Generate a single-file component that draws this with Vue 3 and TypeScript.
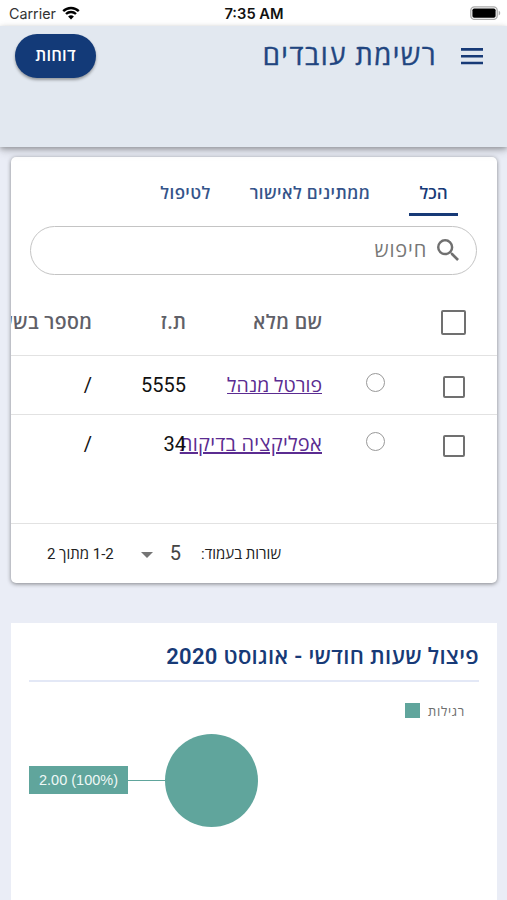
<script setup lang="ts">
interface Employee {
  name: string
  id: string
  shift: string
}

const tabs: string[] = ['הכל', 'ממתינים לאישור', 'לטיפול']
const activeTab = 'הכל'

const employees: Employee[] = [
  { name: 'פורטל מנהל', id: '5555', shift: '/' },
  { name: 'אפליקציה בדיקות', id: '34', shift: '/' },
]
</script>

<template>
  <div class="screen" dir="rtl">
    <div class="status" dir="ltr">
      <div class="carrier">
        <span>Carrier</span>
        <svg class="wifi" viewBox="0 0 18 14" width="18" height="14">
          <path d="M1.2 5.1a11.2 11.2 0 0 1 15.6 0" />
          <path d="M4 8a7.2 7.2 0 0 1 10 0" />
          <path class="dot" d="M9 13.6 6.1 10.6a4.2 4.2 0 0 1 5.8 0z" />
        </svg>
      </div>
      <div class="clock">7:35 AM</div>
      <div class="power">
        <svg viewBox="0 0 31 14" width="31" height="14">
          <rect x="0.8" y="0.8" width="26.4" height="12.6" rx="3.6" fill="#fff" stroke="#aaa" stroke-width="1.3" />
          <rect x="2.4" y="2.4" width="23.2" height="9.4" rx="1.8" fill="#000" />
          <path d="M28.7 4.8c2 .7 2 3.900 0 4.600z" fill="#aaa" />
        </svg>
      </div>
    </div>

    <header class="header">
      <div class="heading">
        <svg class="menu" viewBox="0 0 24 18" width="24" height="18">
          <path d="M1 2.400h22M1 9.200h22M1 16h22" />
        </svg>
        <h1>רשימת עובדים</h1>
      </div>
      <button class="reports">דוחות</button>
    </header>

    <section class="card">
      <nav class="tabs">
        <a v-for="(tab, i) in tabs" :key="tab" class="tab" :class="['tab-' + i, { active: tab === activeTab }]">{{ tab }}</a>
      </nav>

      <div class="search">
        <svg viewBox="3 3 17.500 17.500" width="22" height="22">
          <path d="M15.500 14h-.79l-.28-.27A6.470 6.470 0 0 0 16 9.500 6.500 6.500 0 1 0 9.500 16c1.610 0 3.090-.59 4.230-1.570l.27.28v.79l5 4.990L20.490 19l-4.990-5zm-6 0C7.010 14 5 11.990 5 9.500S7.010 5 9.500 5 14 7.010 14 9.500 11.990 14 9.500 14z" />
        </svg>
        <span>חיפוש</span>
      </div>

      <div class="row head">
        <div class="center"><i class="box large"></i></div>
        <div></div>
        <div class="cell">שם מלא</div>
        <div class="cell">ת.ז</div>
        <div class="cell">מספר בשעון</div>
      </div>
      <div class="rows">
        <div v-for="(e, i) in employees" :key="e.id" class="row">
          <div class="center"><i class="box"></i></div>
          <div class="center"><i class="ring"></i></div>
          <div class="cell"><a class="name" :class="'name-' + i">{{ e.name }}</a></div>
          <div class="cell value">{{ e.id }}</div>
          <div class="cell value">{{ e.shift }}</div>
        </div>
      </div>

      <div class="pager">
        <span class="per-page">שורות בעמוד:</span>
        <span class="size">5</span>
        <svg class="arrow" viewBox="0 0 12 6" width="12" height="6"><path d="M0 0h12L6 6z" /></svg>
        <span class="range">1-2 מתוך 2</span>
      </div>
    </section>

    <section class="panel">
      <h2>פיצול שעות חודשי - אוגוסט 2020</h2>
      <div class="legend">
        <span>רגילות</span>
        <i></i>
      </div>
      <div class="chart" dir="ltr">
        <span class="tag">2.00 (100%)</span>
        <i class="line"></i>
        <i class="pie"></i>
      </div>
    </section>
  </div>
</template>

<style>
body {
  background: #eaedf6;
}
</style>

<style scoped>
.screen {
  display: flex;
  flex-direction: column;
  height: 900px;
  overflow: hidden;
  background: #eaedf6;
  font-family: Roboto, 'Open Sans', 'Liberation Sans', sans-serif;
  white-space: nowrap;
}
.status {
  flex: none;
  display: grid;
  grid-template-columns: 1fr auto 1fr;
  align-items: center;
  height: 26px;
  padding: 0 6px 0 9px;
  box-sizing: border-box;
  background: #fff;
  color: #111;
  font-family: Inter, sans-serif;
}
.carrier {
  display: flex;
  align-items: center;
  gap: 6px;
  color: #333;
  font-size: 14.3px;
}
.wifi {
  fill: none;
  stroke: #000;
  stroke-width: 2.4;
}
.wifi .dot {
  fill: #000;
  stroke: none;
}
.clock {
  padding: 1px 2px 0 0;
  font-weight: 600;
  font-size: 14.7px;
}
.power {
  display: flex;
  justify-content: flex-end;
}
.header {
  flex: none;
  position: relative;
  display: flex;
  justify-content: space-between;
  align-items: flex-start;
  height: 121px;
  padding: 8px 23px 0 15px;
  box-sizing: border-box;
  background: #e2e8f0;
  box-shadow: 0 2px 5px rgba(0, 0, 0, 0.28), 0 4px 10px rgba(0, 0, 0, 0.14);
}
.heading {
  display: flex;
  align-items: center;
  height: 44px;
  gap: 23px;
}
.menu {
  stroke: #173a77;
  stroke-width: 2.6;
}
h1 {
  margin: -4px 0 0;
  color: #214580;
  font-size: 27.5px;
  font-weight: 400;
  letter-spacing: 1.5px;
  -webkit-text-stroke: 0.4px #214580;
}
.reports {
  width: 81px;
  height: 44px;
  padding: 0 0 3px;
  border: 0;
  border-radius: 22px;
  background: #133a78;
  color: #fff;
  font: 600 16.5px Roboto, 'Open Sans', sans-serif;
  letter-spacing: 0.2px;
  box-shadow: 0 2px 3px rgba(0, 0, 0, 0.35);
}
.card {
  flex: none;
  display: flex;
  flex-direction: column;
  height: 426px;
  margin: 10px 10px 0 11px;
  border-radius: 5px;
  overflow: hidden;
  background: #fff;
  box-shadow: 0 1px 4px rgba(0, 0, 0, 0.45);
}
.tabs {
  display: flex;
  gap: 39px;
  height: 59px;
  padding-right: 39px;
}
.tab {
  display: flex;
  justify-content: center;
  align-items: center;
  padding-top: 14px;
  box-sizing: border-box;
  border-bottom: 3px solid transparent;
  color: #35548a;
  font-size: 17px;
  font-weight: 600;
  letter-spacing: 0.4px;
}
.tab-0 {
  width: 49px;
  letter-spacing: 0;
}
.tab-1 {
  width: 120px;
}
.tab-2 {
  width: 51px;
}
.active {
  border-color: #173a77;
  color: #173a77;
}
.search {
  display: flex;
  align-items: center;
  gap: 10px;
  height: 49px;
  margin: 10px 20px 0 19px;
  padding: 0 17px 1px;
  box-sizing: border-box;
  border: 1px solid #c4c4c4;
  border-radius: 25px;
  color: #777;
  font-size: 20px;
  letter-spacing: 0.8px;
}
.search span {
  margin-top: -1px;
}
.search svg {
  fill: #707070;
}
.row {
  display: grid;
  grid-template-columns: 87px 68px 136px 94px 101px;
  align-items: center;
  height: 59px;
  box-sizing: border-box;
  border-bottom: 1px solid #e2e2e2;
}
.row.head {
  height: 81px;
  padding-top: 13px;
}
.rows {
  height: 168px;
  box-sizing: border-box;
  border-bottom: 1px solid #e2e2e2;
}
.rows .row:last-child {
  border-bottom-color: transparent;
}
.center {
  display: flex;
  justify-content: center;
}
.box {
  width: 22px;
  height: 22px;
  margin: 3px 0 0;
  box-sizing: border-box;
  border: 2px solid #707070;
  border-radius: 2px;
}
.box.large {
  width: 25px;
  height: 25px;
  margin: 1px 0 0;
}
.ring {
  width: 19px;
  height: 19px;
  margin: -6px 1px 0 0;
  box-sizing: border-box;
  border: 1px solid #999;
  border-radius: 50%;
}
.cell {
  padding-right: 20px;
  font-size: 20px;
}
.rows .cell {
  padding-bottom: 1px;
}
.head .cell {
  padding-right: 19.5px;
  color: #606068;
  font-size: 19.5px;
  font-weight: 600;
  letter-spacing: 0.4px;
}
.name {
  color: #5b2c91;
  text-decoration: underline;
}
.name-0 {
  font-size: 19.5px;
}
.name-1 {
  letter-spacing: 0.25px;
}
.value {
  color: #111;
}
.rows .value {
  padding-bottom: 0;
}
.pager {
  flex: 1;
  display: flex;
  align-items: center;
  padding: 0 216px 2px 0;
  color: #222;
  font-size: 15px;
}
.size {
  margin-right: 20px;
  color: #444;
  font-size: 20px;
}
.arrow {
  margin: 4px 17px 0 27px;
  fill: #757575;
}
.panel {
  flex: none;
  height: 290px;
  margin: 40px 10px 0 11px;
  padding: 0 18px;
  background: #fff;
}
h2 {
  height: 59px;
  margin: 0;
  padding-top: 9px;
  box-sizing: border-box;
  border-bottom: 2px solid #e3e8f6;
  color: #173a77;
  font-size: 22px;
  font-weight: 600;
  line-height: 50px;
  letter-spacing: 0.33px;
}
.legend {
  display: flex;
  align-items: center;
  gap: 8px;
  height: 57px;
  padding-right: 14px;
  color: #6e6e6e;
  font-size: 13px;
  letter-spacing: 0.7px;
}
.legend i {
  width: 15px;
  height: 15px;
  background: #60a59c;
}
.chart {
  display: flex;
  align-items: center;
  height: 93px;
  margin-top: -5px;
}
.tag {
  width: 99px;
  height: 28px;
  margin-top: -1px;
  background: #60a59c;
  color: #eef8f6;
  font: 14.5px/28px 'Liberation Sans', sans-serif;
  text-align: center;
}
.line {
  width: 37px;
  height: 1px;
  background: #60a59c;
}
.pie {
  width: 93px;
  height: 93px;
  border-radius: 50%;
  background: #60a59c;
}
</style>
